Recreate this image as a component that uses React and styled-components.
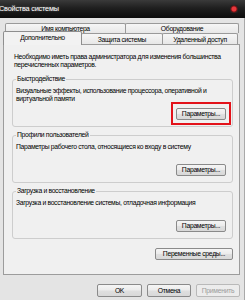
import React from "react";
import styled, { createGlobalStyle } from "styled-components";

const Global = createGlobalStyle`
  html, body { margin: 0; padding: 0; background: #e4e4e4; }
  * { box-sizing: border-box; }
`;

const Window = styled.div`
  width: 245px;
  height: 300px;
  overflow: hidden;
  display: flex;
  flex-direction: column;
  font-family: "Liberation Sans", Arial, sans-serif;
  font-size: 6.8px;
  letter-spacing: -0.33px;
  color: #000;
  background: #e4e4e4;
`;

const TitleBar = styled.div`
  height: 18px;
  flex-shrink: 0;
  display: flex;
  align-items: center;
  justify-content: space-between;
  padding: 0 7px 1px 0;
  background: linear-gradient(#3a3a3a, #1f1f1f 45%, #0d0d0d 100%);
  color: #fff;
`;

const Title = styled.span`
  font-size: 7.3px;
  margin-left: -1px;
  letter-spacing: -0.2px;
  text-shadow: 0 0 2px rgba(255, 255, 255, 0.35);
`;

const CloseDot = styled.span`
  width: 8px;
  height: 8px;
  border-radius: 2px;
  background: radial-gradient(circle, #e8383c 0 2px, #7a1416 3px, #222 4px);
`;

const Body = styled.div`
  flex: 1;
  display: flex;
  flex-direction: column;
  padding: 5px 4px 0 3px;
  border-right: 1px solid #a9a9a9;
`;

const TabRow = styled.div`
  display: flex;
  margin-left: ${(p) => p.$indent || 0}px;
  height: ${(p) => p.$h}px;
`;

const Tab = styled.div`
  width: ${(p) => p.$w}px;
  display: flex;
  align-items: ${(p) => (p.$back ? "flex-start" : "center")};
  justify-content: center;
  padding-top: ${(p) => (p.$back ? "1px" : "0")};
  border: 1px solid #9a9a9a;
  border-bottom: none;
  border-radius: 2px 2px 0 0;
  background: linear-gradient(#f6f6f6, #e7e7e7);
  & + & { margin-left: -1px; }
  ${(p) =>
    p.$active &&
    `
    position: relative;
    z-index: 1;
    margin-top: -2px;
    height: 14px;
    background: #f2f2f2;
    border-color: #8e8e8e;
    padding-bottom: 2px;
  `}
`;

const Panel = styled.div`
  border: 1px solid #9c9c9c;
  background: #f0f0f0;
  padding: 8px 6px 14px 8px;
  display: flex;
  flex-direction: column;
`;

const Intro = styled.p`
  margin: 0 0 6px 2px;
  line-height: 8px;
`;

const Group = styled.fieldset`
  margin: 0;
  min-width: 0;
  padding: 4px 2px 6px 3px;
  border: 1px solid #cdcdcd;
  border-radius: 3px;
  & + & { margin-top: 4px; }
`;

const Legend = styled.legend`
  padding: 0 1px;
  line-height: 8px;
  font-size: 6.8px;
`;

const GroupInner = styled.div`
  height: 33px;
  display: flex;
  flex-direction: column;
`;

const GroupText = styled.div`
  line-height: 8px;
  margin-right: -4px;
`;

const Button = styled.button`
  position: relative;
  height: ${(p) => p.$h || 12}px;
  width: ${(p) => p.$w}px;
  padding: 0;
  font-family: inherit;
  font-size: 6.8px;
  letter-spacing: -0.3px;
  line-height: 10px;
  color: ${(p) => (p.disabled ? "#9c9c9c" : "#000")};
  border: 1px solid ${(p) => (p.disabled ? "#b9b9b9" : "#8a8a8a")};
  border-radius: 2px;
  background: ${(p) =>
    p.disabled
      ? "#ececec"
      : "linear-gradient(#f5f5f5, #ececec 45%, #dfdfdf 55%, #d8d8d8)"};
  align-self: ${(p) => p.$align || "auto"};
  margin-top: ${(p) => (p.$push ? "auto" : "0")};
  margin-right: ${(p) => p.$mr || 0}px;
  ${(p) =>
    p.$highlight &&
    `
    &::after {
      content: "";
      position: absolute;
      top: -7px; bottom: -6px; left: -6px; right: -6px;
      border: 2px solid #e3121a;
    }
  `}
`;

const EnvRow = styled.div`
  display: flex;
  justify-content: flex-end;
  margin-top: 9px;
`;

const Footer = styled.div`
  display: flex;
  justify-content: flex-end;
  gap: 5px;
  margin-top: 9px;
`;

export default function App() {
  const groups = [
    {
      title: "Быстродействие",
      text: "Визуальные эффекты, использование процессора, оперативной и виртуальной памяти",
      highlight: true,
    },
    {
      title: "Профили пользователей",
      text: "Параметры рабочего стола, относящиеся ко входу в систему",
    },
    {
      title: "Загрузка и восстановление",
      text: "Загрузка и восстановление системы, отладочная информация",
    },
  ];
  return (
    <Window>
      <Global />
      <TitleBar>
        <Title>Свойства системы</Title>
        <CloseDot />
      </TitleBar>
      <Body>
        <TabRow $indent={2} $h={10}>
          <Tab $back $w={121}>Имя компьютера</Tab>
          <Tab $back $w={114}>Оборудование</Tab>
        </TabRow>
        <TabRow $h={11}>
          <Tab $active $w={79}>Дополнительно</Tab>
          <Tab $w={82}>Защита системы</Tab>
          <Tab $w={76}>Удаленный доступ</Tab>
        </TabRow>
        <Panel>
          <Intro>
            Необходимо иметь права администратора для изменения большинства
            перечисленных параметров.
          </Intro>
          {groups.map((g) => (
            <Group key={g.title}>
              <Legend>{g.title}</Legend>
              <GroupInner>
                <GroupText>{g.text}</GroupText>
                <Button $w={50} $mr={4} $push $align="flex-end" $highlight={g.highlight}>
                  Параметры...
                </Button>
              </GroupInner>
            </Group>
          ))}
          <EnvRow>
            <Button $w={78}>Переменные среды...</Button>
          </EnvRow>
        </Panel>
        <Footer>
          <Button $w={45} $h={13}>OK</Button>
          <Button $w={44} $h={13}>Отмена</Button>
          <Button $w={44} $h={13} disabled>Применить</Button>
        </Footer>
      </Body>
    </Window>
  );
}
